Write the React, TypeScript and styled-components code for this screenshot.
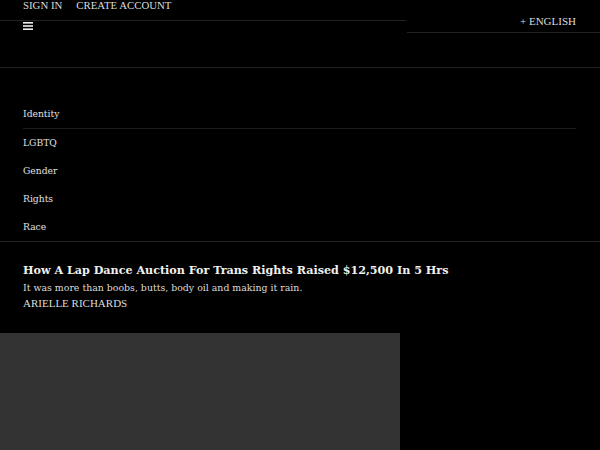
import styled, { createGlobalStyle } from 'styled-components';

const topics = ['Identity', 'LGBTQ', 'Gender', 'Rights', 'Race'];

const App = () => {
    return (
        <Page>
            <GlobalStyle />
            <Header>
                <LeftColumn>
                    <AccountBar>
                        <AccountLink>SIGN IN</AccountLink>
                        <AccountLink>CREATE ACCOUNT</AccountLink>
                    </AccountBar>
                    <MenuButton aria-label="menu">
                        <svg width="10" height="8" viewBox="0 0 10 8">
                            <rect x="0" y="0" width="10" height="1.6" fill="#eee" />
                            <rect x="0" y="3.2" width="10" height="1.6" fill="#eee" />
                            <rect x="0" y="6.4" width="10" height="1.6" fill="#eee" />
                        </svg>
                    </MenuButton>
                </LeftColumn>
                <RightColumn>
                    <LangBar>+ ENGLISH</LangBar>
                </RightColumn>
            </Header>
            <TopicNav>
                {topics.map((topic, i) => (
                    <TopicItem key={topic} $divided={i === 0}>
                        {topic}
                    </TopicItem>
                ))}
            </TopicNav>
            <Article>
                <Headline>How A Lap Dance Auction For Trans Rights Raised $12,500 In 5 Hrs</Headline>
                <Dek>It was more than boobs, butts, body oil and making it rain.</Dek>
                <Byline>ARIELLE RICHARDS</Byline>
            </Article>
            <ImageBlock />
        </Page>
    );
};

export default App;

const GlobalStyle = createGlobalStyle`
    html, body {
        margin: 0;
        padding: 0;
        background: #000;
        height: 100%;
        overflow: hidden;
    }
`;

const Page = styled.div`
    background: #000;
    color: #dcdcdc;
    width: 600px;
    height: 450px;
    overflow: hidden;
    display: flex;
    flex-direction: column;
`;

const Header = styled.header`
    display: flex;
    height: 67px;
    border-bottom: 1px solid #222;
    box-sizing: content-box;
`;

const LeftColumn = styled.div`
    width: 407px;
    display: flex;
    flex-direction: column;
`;

const AccountBar = styled.div`
    height: 20px;
    padding-left: 23px;
    border-bottom: 1px solid #222;
    width: 383px;
    display: flex;
    gap: 14px;
    font-family: 'Liberation Serif', serif;
    font-size: 10.8px;
    line-height: 11px;
`;

const AccountLink = styled.span`
    color: #dcdcdc;
`;

const MenuButton = styled.div`
    margin: 1px 0 0 23px;
    width: 10px;
    height: 8px;
    display: flex;
`;

const RightColumn = styled.div`
    flex: 1;
    padding-top: 12px;
`;

const LangBar = styled.div`
    height: 20px;
    border-bottom: 1px solid #222;
    text-align: right;
    padding-right: 24px;
    font-family: 'Liberation Serif', serif;
    font-size: 11px;
    line-height: 18px;
    color: #dcdcdc;
`;

const TopicNav = styled.nav`
    padding: 32px 24px 0 23px;
    border-bottom: 1px solid #222;
    display: flex;
    flex-direction: column;
`;

interface TopicItemProps {
    $divided: boolean;
}

const TopicItem = styled.div<TopicItemProps>`
    height: 28px;
    line-height: 27px;
    font-family: 'DejaVu Serif', serif;
    font-size: 9.2px;
    color: #e0e0e0;
    border-bottom: ${props => (props.$divided ? '1px solid #1c1c1c' : 'none')};
    box-sizing: ${props => (props.$divided ? 'content-box' : 'border-box')};
`;

const Article = styled.article`
    padding: 21px 23px 0;
    height: 91px;
    box-sizing: border-box;
`;

const Headline = styled.h2`
    margin: 0;
    font-family: 'DejaVu Serif', serif;
    font-weight: bold;
    font-size: 11.15px;
    line-height: 16px;
    color: #f0f0f0;
`;

const Dek = styled.p`
    margin: 0;
    font-family: 'DejaVu Serif', serif;
    font-size: 9.4px;
    line-height: 17px;
    color: #dcdcdc;
`;

const Byline = styled.div`
    font-family: 'Liberation Serif', serif;
    font-size: 11px;
    line-height: 15px;
    color: #dcdcdc;
`;

const ImageBlock = styled.div`
    width: 400px;
    flex: 1;
    background: #333;
`;
